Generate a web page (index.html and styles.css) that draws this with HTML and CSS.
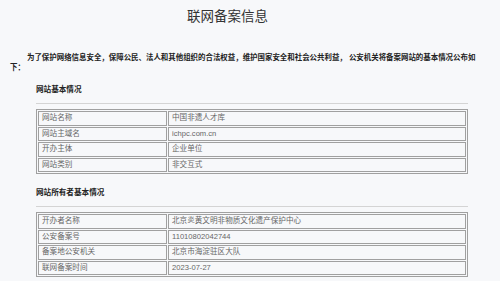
FILE: index.html
```html
<!DOCTYPE html>
<html lang="zh-CN">
<head>
<meta charset="utf-8">
<title>联网备案信息</title>
<link rel="stylesheet" href="styles.css">
</head>
<body>
<div class="page">
  <h1 class="title">联网备案信息</h1>
  <p class="intro">为了保护网络信息安全，保障公民、法人和其他组织的合法权益，维护国家安全和社会公共利益， 公安机关将备案网站的基本情况公布如下：</p>
  <div class="section">
    <h2 class="section-title">网站基本情况</h2>
    <hr class="rule">
    <table class="info">
      <tr><td class="key">网站名称</td><td class="val">中国非遗人才库</td></tr>
      <tr><td class="key">网站主域名</td><td class="val">ichpc.com.cn</td></tr>
      <tr><td class="key">开办主体</td><td class="val">企业单位</td></tr>
      <tr><td class="key">网站类别</td><td class="val">非交互式</td></tr>
    </table>
  </div>
  <div class="section section-second">
    <h2 class="section-title">网站所有者基本情况</h2>
    <hr class="rule">
    <table class="info">
      <tr><td class="key">开办者名称</td><td class="val">北京炎黄文明非物质文化遗产保护中心</td></tr>
      <tr><td class="key">公安备案号</td><td class="val">11010802042744</td></tr>
      <tr><td class="key">备案地公安机关</td><td class="val">北京市海淀驻区大队</td></tr>
      <tr><td class="key">联网备案时间</td><td class="val">2023-07-27</td></tr>
    </table>
  </div>
</div>
</body>
</html>
```

FILE: styles.css
```css
html, body {
  margin: 0;
  padding: 0;
  background: #f7f8fa;
}
body {
  font-family: "Liberation Sans", "Noto Sans CJK SC", sans-serif;
  color: #333;
}
.page {
  padding: 0 10px;
}
.title {
  width: 435px;
  margin: 7px 0 0 0;
  font-size: 13.5px;
  line-height: 20px;
  font-weight: normal;
  text-align: center;
  color: #333;
}
.intro {
  margin: 26px 0 0 0;
  font-size: 7.45px;
  line-height: 10px;
  font-weight: bold;
  text-indent: 17px;
  color: #222;
}
.section {
  margin: 12px 0 0 26px;
  width: 432px;
}
.section-second {
  margin-top: 14px;
}
.section-title {
  margin: 0;
  font-size: 7.6px;
  line-height: 10px;
  font-weight: bold;
  color: #222;
}
.rule {
  margin: 8px 0 5px 0;
  border: 0;
  height: 1px;
  background: #d4d4d4;
}
.info {
  width: 432px;
  border: 1px solid #a0a0a0;
  border-spacing: 1px;
  border-collapse: separate;
}
.info td {
  border: 1px solid #a0a0a0;
  height: 12.5px;
  padding: 0 0 0 3px;
  font-size: 7.6px;
  line-height: 12.5px;
  color: #666;
  vertical-align: middle;
}
.info td.key {
  width: 124px;
}
```
